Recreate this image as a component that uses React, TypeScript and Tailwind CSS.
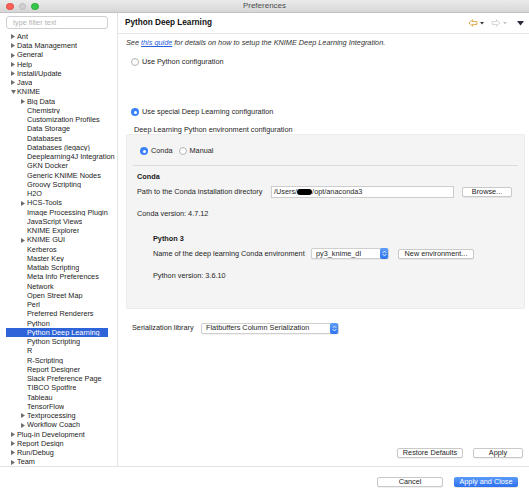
import React from 'react';

type TreeItem = { label: string; level: 0 | 1; arrow?: 'right' | 'down'; selected?: boolean };

const TREE: TreeItem[] = [
  { label: 'Ant', level: 0, arrow: 'right' },
  { label: 'Data Management', level: 0, arrow: 'right' },
  { label: 'General', level: 0, arrow: 'right' },
  { label: 'Help', level: 0, arrow: 'right' },
  { label: 'Install/Update', level: 0, arrow: 'right' },
  { label: 'Java', level: 0, arrow: 'right' },
  { label: 'KNIME', level: 0, arrow: 'down' },
  { label: 'Big Data', level: 1, arrow: 'right' },
  { label: 'Chemistry', level: 1 },
  { label: 'Customization Profiles', level: 1 },
  { label: 'Data Storage', level: 1 },
  { label: 'Databases', level: 1 },
  { label: 'Databases (legacy)', level: 1 },
  { label: 'Deeplearning4J Integration', level: 1 },
  { label: 'GKN Docker', level: 1 },
  { label: 'Generic KNIME Nodes', level: 1 },
  { label: 'Groovy Scripting', level: 1 },
  { label: 'H2O', level: 1 },
  { label: 'HCS-Tools', level: 1, arrow: 'right' },
  { label: 'Image Processing Plugin', level: 1 },
  { label: 'JavaScript Views', level: 1 },
  { label: 'KNIME Explorer', level: 1 },
  { label: 'KNIME GUI', level: 1, arrow: 'right' },
  { label: 'Kerberos', level: 1 },
  { label: 'Master Key', level: 1 },
  { label: 'Matlab Scripting', level: 1 },
  { label: 'Meta Info Preferences', level: 1 },
  { label: 'Network', level: 1 },
  { label: 'Open Street Map', level: 1 },
  { label: 'Perl', level: 1 },
  { label: 'Preferred Renderers', level: 1 },
  { label: 'Python', level: 1 },
  { label: 'Python Deep Learning', level: 1, selected: true },
  { label: 'Python Scripting', level: 1 },
  { label: 'R', level: 1 },
  { label: 'R-Scripting', level: 1 },
  { label: 'Report Designer', level: 1 },
  { label: 'Slack Preference Page', level: 1 },
  { label: 'TIBCO Spotfire', level: 1 },
  { label: 'Tableau', level: 1 },
  { label: 'TensorFlow', level: 1 },
  { label: 'Textprocessing', level: 1, arrow: 'right' },
  { label: 'Workflow Coach', level: 1, arrow: 'right' },
  { label: 'Plug-in Development', level: 0, arrow: 'right' },
  { label: 'Report Design', level: 0, arrow: 'right' },
  { label: 'Run/Debug', level: 0, arrow: 'right' },
  { label: 'Team', level: 0, arrow: 'right' },
];

function Radio({ checked, label }: { checked?: boolean; label: string }) {
  return (
    <div className="flex items-center gap-[3px]">
      {checked ? (
        <span className="w-[8px] h-[8px] rounded-full bg-[#3a82f7] flex items-center justify-center">
          <span className="w-[3px] h-[3px] rounded-full bg-white" />
        </span>
      ) : (
        <span className="w-[8px] h-[8px] rounded-full bg-white border border-[#b5b5b5] shadow-[inset_0_0.5px_0.5px_rgba(0,0,0,0.08)]" />
      )}
      <span>{label}</span>
    </div>
  );
}

function Button({ label, className = '' }: { label: string; className?: string }) {
  return (
    <div
      className={`h-[10px] rounded-[2px] bg-white border border-[#c9c9c9] shadow-[0_0.5px_0.5px_rgba(0,0,0,0.12)] flex items-center justify-center text-[#262626] ${className}`}
    >
      {label}
    </div>
  );
}

function Stepper() {
  return (
    <span className="w-[8px] h-[11px] rounded-[2px] bg-gradient-to-b from-[#5d9cf8] to-[#2f74ef] flex items-center justify-center">
      <svg width="5" height="7" viewBox="0 0 5 7" fill="none" stroke="white" strokeWidth="0.9" strokeLinecap="round" strokeLinejoin="round">
        <path d="M1 2.6 L2.5 1.1 L4 2.6" />
        <path d="M1 4.4 L2.5 5.9 L4 4.4" />
      </svg>
    </span>
  );
}

function Select({ value, className = '' }: { value: string; className?: string }) {
  return (
    <div
      className={`h-[11px] rounded-[2px] bg-white border border-[#cfcfcf] shadow-[0_0.5px_0.5px_rgba(0,0,0,0.1)] flex items-center justify-between pl-[4px] ${className}`}
    >
      <span className="text-[#1f1f1f]">{value}</span>
      <Stepper />
    </div>
  );
}

function NavArrow({ dir, color }: { dir: 'left' | 'right'; color: string }) {
  const d = dir === 'left' ? 'M1 4 L4.5 0.8 V2.6 H9 V5.4 H4.5 V7.2 Z' : 'M9 4 L5.5 0.8 V2.6 H1 V5.4 H5.5 V7.2 Z';
  return (
    <svg width="10" height="8" viewBox="0 0 10 8" fill="none" stroke={color} strokeWidth="0.9" strokeLinejoin="round">
      <path d={d} />
    </svg>
  );
}

function Caret({ color }: { color: string }) {
  return (
    <svg width="4" height="3" viewBox="0 0 4 3">
      <path d="M0 0 H4 L2 2.6 Z" fill={color} />
    </svg>
  );
}

function TreeRow({ item }: { item: TreeItem }) {
  // selected row is a band from x=6 to x=108, text still starts at x=27
  const pad = item.selected ? 'ml-[6px] w-[102px] pl-[15px] bg-[#2f63d8] text-white' : item.level === 0 ? 'pl-[11px] text-[#1c1c1c]' : 'pl-[21px] text-[#1c1c1c]';
  return (
    <div className={`h-[9.25px] flex items-center ${pad}`}>
      <span className="w-[6px] shrink-0 flex items-center">
        {item.arrow === 'right' && (
          <svg width="4" height="5" viewBox="0 0 4 5">
            <path d="M0 0 L4 2.5 L0 5 Z" fill="#6e6e6e" />
          </svg>
        )}
        {item.arrow === 'down' && (
          <svg width="5" height="4" viewBox="0 0 5 4">
            <path d="M0 0 H5 L2.5 4 Z" fill="#6e6e6e" />
          </svg>
        )}
      </span>
      <span className="whitespace-nowrap overflow-hidden">{item.label}</span>
    </div>
  );
}

export default function App() {
  return (
    <div
      className="w-[529px] h-[499px] bg-white overflow-hidden flex flex-col text-[7.3px] leading-none text-[#262626]"
      style={{ fontFamily: '"Liberation Sans", Arial, sans-serif' }}
    >
      {/* title bar */}
      <div className="h-[13px] shrink-0 relative flex items-center justify-center bg-gradient-to-b from-[#ebebeb] to-[#d6d6d6] border-b border-[#c2c2c2]">
        <div className="absolute left-[6px] top-[2.5px] flex gap-[5px]">
          <span className="w-[7.5px] h-[7.5px] rounded-full bg-[#fc5f57] border-[0.5px] border-[#df4744]" />
          <span className="w-[7.5px] h-[7.5px] rounded-full bg-[#d0d0d0] border-[0.5px] border-[#bcbcbc]" />
          <span className="w-[7.5px] h-[7.5px] rounded-full bg-[#34c84a] border-[0.5px] border-[#27aa36]" />
        </div>
        <span className="text-[8px] text-[#4d4d4d]">Preferences</span>
      </div>

      <div className="flex h-[454px] shrink-0 border-b border-[#e3e3e3]">
        {/* left tree */}
        <div className="w-[118px] shrink-0 border-r border-[#e3e3e3] flex flex-col overflow-hidden">
          <div className="mt-[3px] ml-[6px] w-[102px] h-[13px] shrink-0 rounded-[3px] border border-[#cfcfcf] flex items-center pl-[6px] text-[#b4b4b4]">
            type filter text
          </div>
          <div className="mt-[3px]">
            {TREE.map((item) => (
              <TreeRow key={item.label} item={item} />
            ))}
          </div>
        </div>

        {/* right page */}
        <div className="flex-1 flex flex-col">
          <div className="h-[21px] shrink-0 border-b border-[#e6e6e6] flex items-center justify-between pl-[7px] pr-[5px]">
            <span className="text-[8.2px] font-bold text-[#111]">Python Deep Learning</span>
            <div className="flex items-center gap-[2px]">
              <NavArrow dir="left" color="#d9a233" />
              <Caret color="#333" />
              <span className="w-[3px]" />
              <NavArrow dir="right" color="#cfcfcf" />
              <Caret color="#c4c4c4" />
              <span className="w-[6px]" />
              <svg width="7" height="5" viewBox="0 0 7 5">
                <path d="M0 0 H7 L3.5 4.5 Z" fill="#2a2a3a" />
              </svg>
            </div>
          </div>

          <div className="mt-[4px] h-[10px] flex items-center pl-[8px] italic text-[#333]">
            See&nbsp;<span className="text-[#2a5ee0] underline">this guide</span>&nbsp;for details on how to setup the KNIME Deep Learning Integration.
          </div>

          <div className="mt-[9px] h-[10px] flex items-center pl-[13px]">
            <Radio label="Use Python configuration" />
          </div>

          <div className="mt-[40px] h-[10px] flex items-center pl-[13px]">
            <Radio checked label="Use special Deep Learning configuration" />
          </div>

          <div className="mt-[8px] h-[9px] flex items-center pl-[16px]">Deep Learning Python environment configuration</div>

          <div className="ml-[8px] mr-[4px] rounded-[2px] bg-[#f4f4f4] border border-[#ececec] flex flex-col pb-[27px]">
            <div className="mt-[11px] h-[10px] flex items-center gap-[6px] pl-[13px]">
              <Radio checked label="Conda" />
              <Radio label="Manual" />
            </div>
            <div className="mt-[9px] mx-[6px] border-t border-[#dcdcdc]" />
            <div className="mt-[6px] h-[10px] flex items-center pl-[10px] font-bold text-[#1a1a1a]">Conda</div>
            <div className="mt-[4px] h-[12px] flex items-center pl-[10px]">
              <span className="w-[134px] shrink-0">Path to the Conda installation directory</span>
              <div className="w-[183px] h-[12px] bg-white border border-[#cdcdcd] flex items-center pl-[2px] text-[#1f1f1f]">
                /Users/<span className="inline-block w-[15px] h-[6px] rounded-[3px] bg-black" />/opt/anaconda3
              </div>
              <Button label="Browse..." className="ml-[8px] w-[50px]" />
            </div>
            <div className="mt-[11px] h-[10px] flex items-center pl-[10px]">Conda version: 4.7.12</div>
            <div className="mt-[15px] h-[10px] flex items-center pl-[26px] font-bold text-[#1a1a1a]">Python 3</div>
            <div className="mt-[4px] h-[11px] flex items-center pl-[26px]">
              <span className="w-[158px] shrink-0">Name of the deep learning Conda environment</span>
              <Select value="py3_knime_dl" className="w-[78px]" />
              <Button label="New environment..." className="ml-[9px] w-[76px]" />
            </div>
            <div className="mt-[12px] h-[10px] flex items-center pl-[26px]">Python version: 3.6.10</div>
          </div>

          <div className="mt-[13px] h-[12px] flex items-center pl-[14px]">
            <span className="w-[69px] shrink-0">Serialization library</span>
            <Select value="Flatbuffers Column Serialization" className="w-[138px]" />
          </div>

          <div className="mt-auto mb-[8px] flex justify-end gap-[10px] pr-[6px]">
            <Button label="Restore Defaults" className="w-[66px]" />
            <Button label="Apply" className="w-[50px]" />
          </div>
        </div>
      </div>

      {/* bottom buttons */}
      <div className="flex-1 flex items-start justify-end gap-[11px] pt-[10px] pr-[11px]">
        <Button label="Cancel" className="w-[66px]" />
        <div className="w-[64px] h-[10px] rounded-[2px] bg-gradient-to-b from-[#5a9bf9] to-[#2e6fee] text-white flex items-center justify-center shadow-[0_0.5px_0.5px_rgba(0,0,0,0.2)]">
          Apply and Close
        </div>
      </div>
    </div>
  );
}
